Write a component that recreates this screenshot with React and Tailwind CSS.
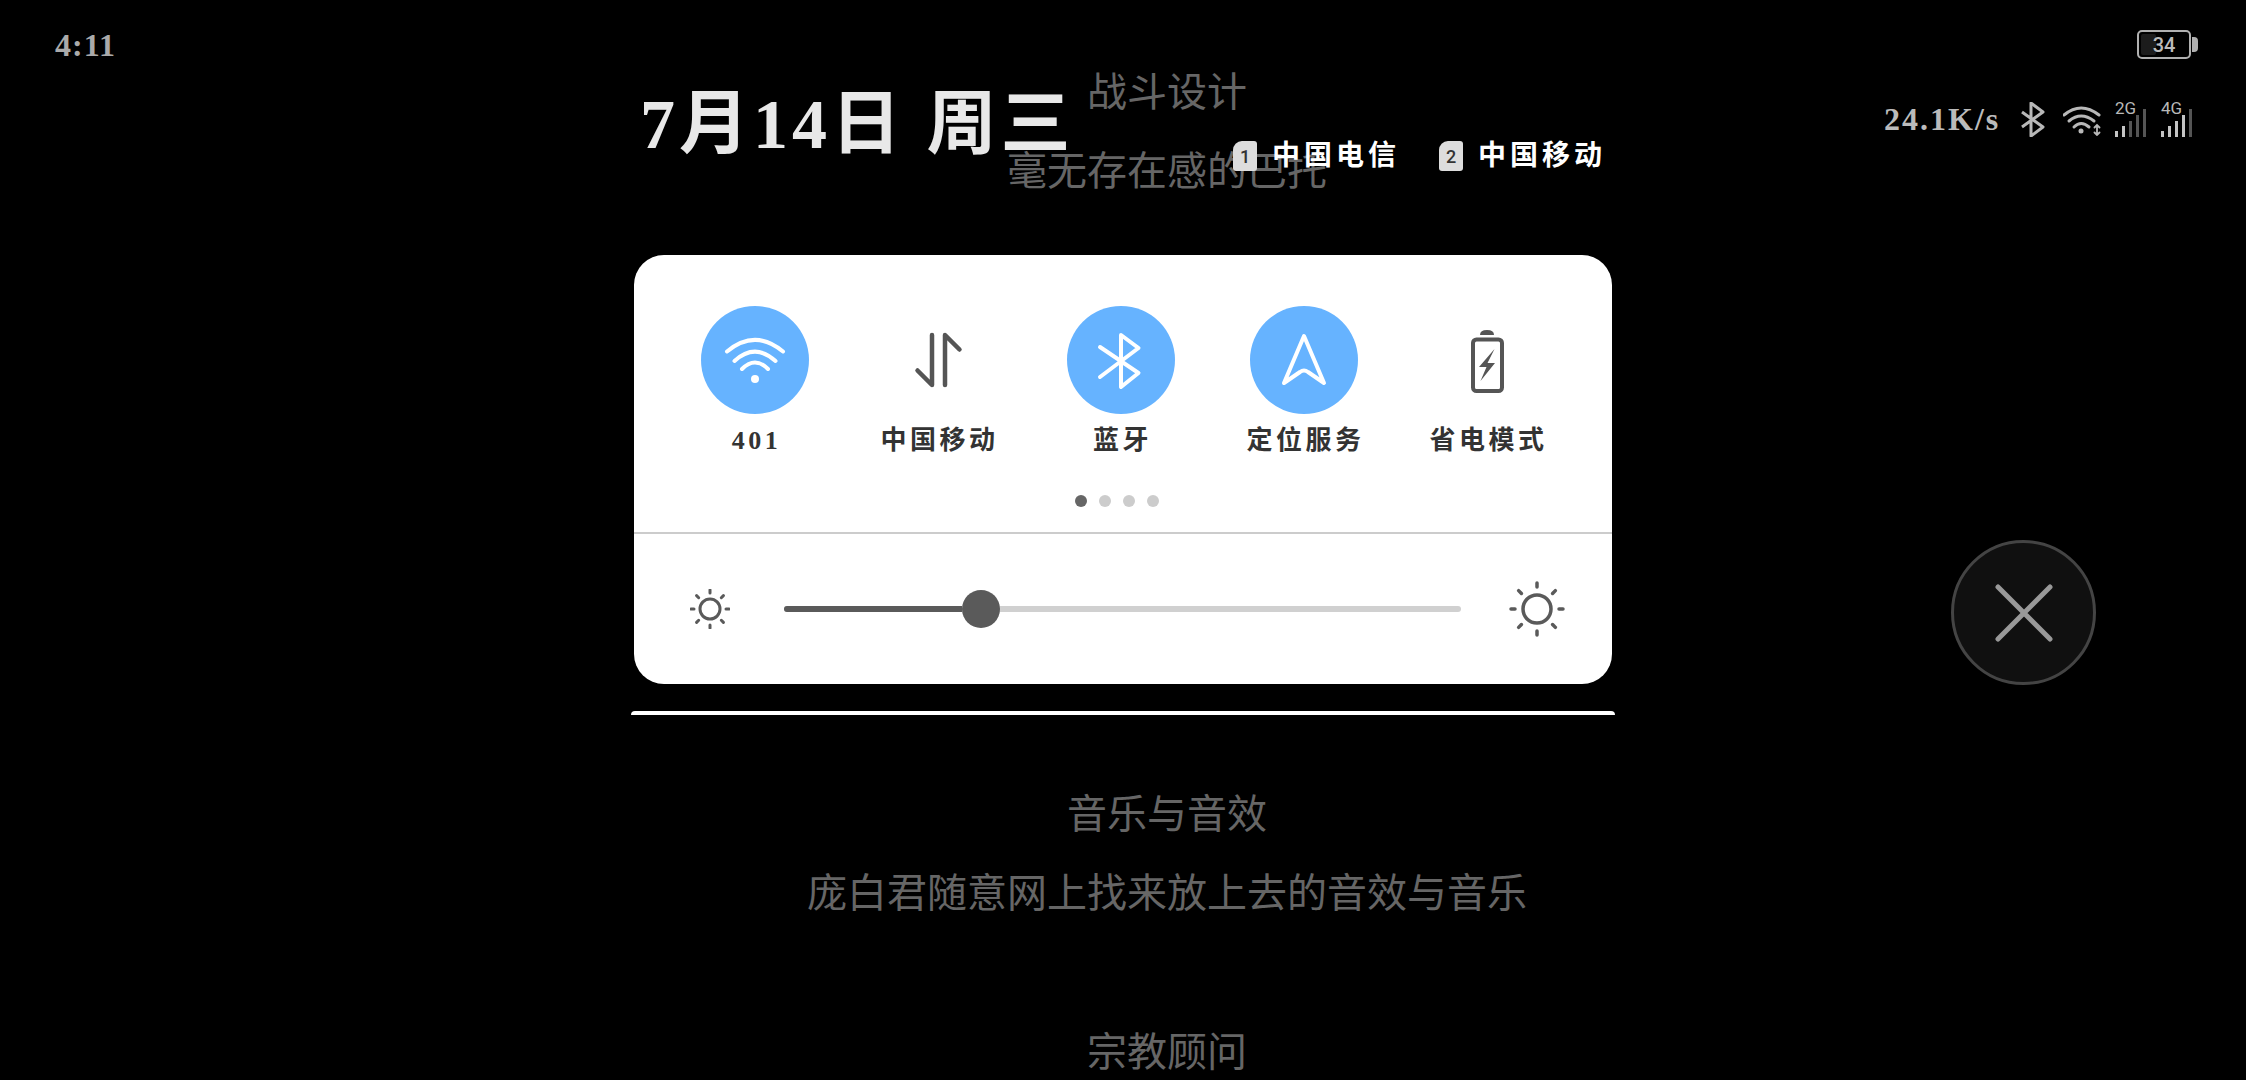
import React from 'react';

const brush = "font-['Liberation_Serif','Noto_Sans_CJK_SC',serif] font-bold";
const credit = "font-['Noto_Sans_CJK_SC',sans-serif] font-normal text-[40px] leading-[79px] text-[#666666]";

const WifiIcon = () => (
  <svg width="108" height="108" viewBox="0 0 108 108" fill="none" stroke="#fff" strokeWidth="4" strokeLinecap="round">
    <path d="M26 45.5Q54 22.3 82 45.5" />
    <path d="M33.5 55Q54 36.4 74.5 55" />
    <path d="M41 63Q54 50 67 63" />
    <circle cx="54" cy="73" r="4" fill="#fff" stroke="none" />
  </svg>
);

const DataIcon = () => (
  <svg width="108" height="108" viewBox="0 0 108 108" fill="none" stroke="#555" strokeWidth="4.5" strokeLinecap="round" strokeLinejoin="round">
    <path d="M48 29V79L33.5 64.5" />
    <path d="M61 79V29L75.5 43.5" />
  </svg>
);

const BluetoothIcon = () => (
  <svg width="108" height="108" viewBox="0 0 108 108" fill="none" stroke="#fff" strokeWidth="4" strokeLinecap="round" strokeLinejoin="round">
    <path d="M33 41L71.5 67L54 81V29L71.5 42L33 71" />
  </svg>
);

const LocationIcon = () => (
  <svg width="108" height="108" viewBox="0 0 108 108" fill="none" stroke="#fff" strokeWidth="4" strokeLinecap="round" strokeLinejoin="round">
    <path d="M54 30L74 77L58 66Q54 63 50 66L34 77Z" />
  </svg>
);

const BatterySaverIcon = () => (
  <svg width="108" height="108" viewBox="0 0 108 108" fill="none">
    <rect x="40" y="33.5" width="29" height="51.5" rx="3.5" stroke="#555" strokeWidth="4" />
    <path d="M47 29Q47 24 54 24Q61 24 61 29Z" fill="#555" />
    <path d="M61.5 43L46 61H53.5L47.5 75L62 57H54.5Z" fill="#555" />
  </svg>
);

const Sun = ({ size, r, inner, outer, width }) => {
  const c = size / 2;
  const rays = [0, 45, 90, 135, 180, 225, 270, 315];
  return (
    <svg width={size} height={size} viewBox={`0 0 ${size} ${size}`} fill="none" stroke="#5a5a5a" strokeWidth={width} strokeLinecap="round">
      <circle cx={c} cy={c} r={r} />
      {rays.map((deg) => {
        const a = (deg * Math.PI) / 180;
        return (
          <line
            key={deg}
            x1={c + inner * Math.cos(a)}
            y1={c + inner * Math.sin(a)}
            x2={c + outer * Math.cos(a)}
            y2={c + outer * Math.sin(a)}
          />
        );
      })}
    </svg>
  );
};

const Signal = ({ label, lit }) => {
  const heights = [6, 11, 16, 22, 28];
  return (
    <div className="relative w-[31px] h-[35px]">
      <span className="absolute left-0 top-[-2px] font-['Roboto',sans-serif] text-[17px] leading-[17px] text-[#b8b8b8]">{label}</span>
      <svg className="absolute left-0 top-0" width="31" height="35" viewBox="0 0 31 35">
        {heights.map((h, i) => (
          <rect key={i} x={i * 7} y={35 - h} width="3" height={h} fill={i < lit ? '#c4c4c4' : '#555'} />
        ))}
      </svg>
    </div>
  );
};

const tiles = [
  { label: '401', icon: <WifiIcon />, on: true },
  { label: '中国移动', icon: <DataIcon /> },
  { label: '蓝牙', icon: <BluetoothIcon />, on: true },
  { label: '定位服务', icon: <LocationIcon />, on: true },
  { label: '省电模式', icon: <BatterySaverIcon /> },
];

const Tile = ({ label, icon, on }) => (
  <div className="flex flex-col items-center">
    <div className={`size-[108px] rounded-full flex items-center justify-center ${on ? 'bg-[#66b3ff]' : ''}`}>{icon}</div>
    <div className={`${brush} mt-[11px] pl-[4px] text-[26px] leading-[32px] tracking-[3.5px] text-[#333333] whitespace-nowrap`}>{label}</div>
  </div>
);

const SimLabel = ({ n, name }) => (
  <div className="flex items-center">
    <div className="w-[24px] h-[30px] rounded-[3px] rounded-tl-[9px] bg-[#dddddd] flex items-center justify-center font-['Roboto',sans-serif] font-medium text-[18px] text-[#333333]">{n}</div>
    <div className={`${brush} ml-[15px] w-[125px] text-[28px] leading-[32px] tracking-[4px] text-white whitespace-nowrap`}>{name}</div>
  </div>
);

export default function App() {
  return (
    <div className="relative w-[2246px] h-[1080px] overflow-hidden bg-black">
      {/* scrolling credits behind the shade */}
      <div className="ml-[88px] pt-[50px] flex flex-col items-center">
        <div className={credit}>战斗设计</div>
        <div className={credit}>毫无存在感的巴托</div>
        <div className="h-[564px]" />
        <div className={credit}>音乐与音效</div>
        <div className={credit}>庞白君随意网上找来放上去的音效与音乐</div>
        <div className="h-[80px]" />
        <div className={credit}>宗教顾问</div>
      </div>

      {/* notification shade */}
      <div className="absolute inset-0 flex flex-col">
        <div className="h-[89px] shrink-0 pl-[55px] pr-[48px] flex items-center justify-between">
          <div className={`${brush} text-[32px] tracking-[1px] text-[#aaaaaa]`}>4:11</div>
          <div className="flex items-center gap-[1px]">
            <div className="relative w-[54px] h-[29px] rounded-[5px] border-2 border-[#b0b0b0] flex items-center justify-center">
              <div className="absolute left-[2px] top-[2px] bottom-[2px] w-[15px] rounded-[2px] bg-[#1c1c1c]" />
              <span className="relative font-['Roboto',sans-serif] font-medium text-[20px] leading-none text-[#bbbbbb]">34</span>
            </div>
            <div className="w-[6px] h-[15px] rounded-r-[4px] bg-[#b0b0b0]" />
          </div>
        </div>

        <div className="h-[166px] shrink-0 flex items-start pl-[640px]">
          <div className={`${brush} w-[434px] text-[70px] leading-[72px] tracking-[4px] text-[#e8e8e8] whitespace-nowrap`}>7月14日 周三</div>
          <div className="ml-[159px] mt-[51px] flex items-center gap-[42px]">
            <SimLabel n="1" name="中国电信" />
            <SimLabel n="2" name="中国移动" />
          </div>
          <div className="ml-[281px] mt-[13px] flex items-start">
            <div className={`${brush} w-[120px] text-[32px] leading-[35px] tracking-[2px] text-[#bbbbbb] whitespace-nowrap`}>24.1K/s</div>
            <svg className="ml-[16px]" width="25" height="35" viewBox="0 0 25 35" fill="none" stroke="#b8b8b8" strokeWidth="3" strokeLinejoin="round">
              <path d="M2 10L23 25L11 34V1L23 10L2 25" />
            </svg>
            <svg className="ml-[18px] mt-[4px]" width="39" height="30" viewBox="0 0 39 30" fill="none" stroke="#b8b8b8" strokeWidth="3" strokeLinecap="round">
              <path d="M1 9Q18 -5 36 9" />
              <path d="M6 15Q18 5 31 15" />
              <path d="M11 21Q18 14 26 21" />
              <circle cx="18" cy="25" r="2.5" fill="#b8b8b8" stroke="none" />
              <path d="M34 19V29M31.5 21.5L34 19L36.5 21.5M31.5 26.5L34 29L36.5 26.5" strokeWidth="1.8" />
            </svg>
            <div className="ml-[13px]"><Signal label="2G" lit={2} /></div>
            <div className="ml-[15px]"><Signal label="4G" lit={4} /></div>
          </div>
        </div>

        <div className="ml-[634px] w-[978px] h-[429px] shrink-0 rounded-[30px] bg-white flex flex-col">
          <div className="pt-[51px] pl-[29px] w-[944px] grid grid-cols-5">
            {tiles.map((t) => (
              <Tile key={t.label} {...t} />
            ))}
          </div>
          <div className="mt-[38px] mr-[12px] flex justify-center gap-[12px]">
            <div className="size-[12px] rounded-full bg-[#666666]" />
            <div className="size-[12px] rounded-full bg-[#cccccc]" />
            <div className="size-[12px] rounded-full bg-[#cccccc]" />
            <div className="size-[12px] rounded-full bg-[#cccccc]" />
          </div>
          <div className="mt-[25px] h-[2px] bg-[#cccccc]" />
          <div className="flex-1 flex items-center pl-[56px]">
            <Sun size={40} r={10} inner={16} outer={19} width={3} />
            <div className="ml-[54px] w-[677px] h-[6px] rounded-full bg-[#d0d0d0] flex items-center">
              <div className="w-[178px] h-[6px] rounded-l-full bg-[#5a5a5a]" />
              <div className="size-[38px] shrink-0 rounded-full bg-[#5a5a5a]" />
            </div>
            <div className="ml-[46px]">
              <Sun size={60} r={14} inner={22} outer={26} width={3.5} />
            </div>
          </div>
        </div>

        <div className="mt-[27px] ml-[631px] w-[984px] h-[4px] shrink-0 rounded-t-[6px] bg-white" />
      </div>

      <button className="absolute left-[1951px] top-[540px] size-[145px] rounded-full border-[3px] border-[#444444] bg-[#101010] flex items-center justify-center">
        <svg width="60" height="60" viewBox="0 0 60 60" stroke="#999" strokeWidth="5" strokeLinecap="round">
          <path d="M4 4L56 56M56 4L4 56" />
        </svg>
      </button>
    </div>
  );
}
